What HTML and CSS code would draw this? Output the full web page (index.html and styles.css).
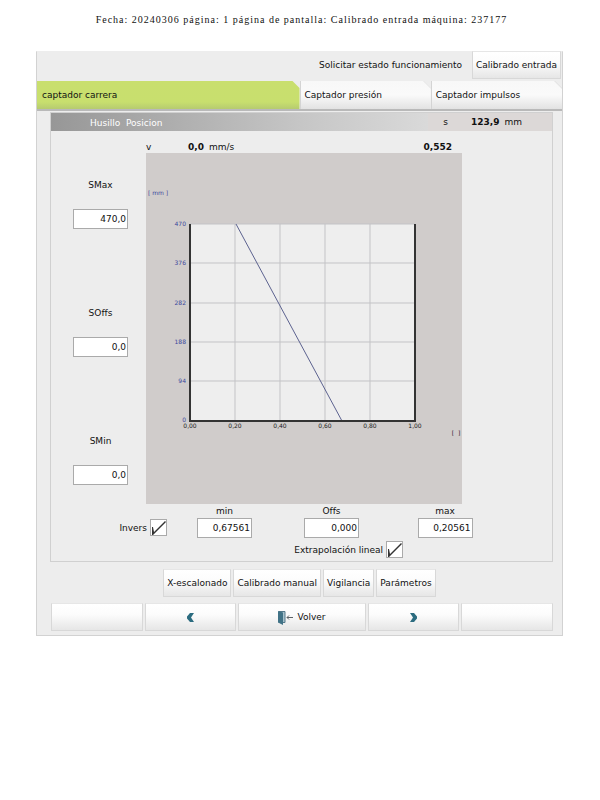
FILE: index.html
```html
<!DOCTYPE html>
<html lang="es">
<head>
    <meta charset="utf-8">
    <title>Calibrado entrada</title>
    <link rel="stylesheet" href="styles.css">
</head>
<body>
    <p class="print-header">Fecha: 20240306 página: 1 página de pantalla: Calibrado entrada máquina: 237177</p>

    <main class="screen">
        <header class="topbar">
            <span>Solicitar estado funcionamiento</span>
            <button class="btn btn-top">Calibrado entrada</button>
        </header>

        <nav class="tabs">
            <button class="tab active">captador carrera</button>
            <button class="tab">Captador presión</button>
            <button class="tab">Captador impulsos</button>
        </nav>

        <section class="group">
            <div class="title-bar">
                <h1>Husillo&nbsp; Posicion</h1>
                <div class="position">
                    <span class="position-name">s</span>
                    <b>123,9</b>
                    <span>mm</span>
                </div>
            </div>

            <div class="readings">
                <span class="speed-name">v</span>
                <b>0,0</b>
                <span class="unit">mm/s</span>
                <b class="signal">0,552</b>
            </div>

            <div class="calibration">
                <div class="limits">
                    <div class="limit">
                        <label for="smax">SMax</label>
                        <input type="text" id="smax" value="470,0">
                    </div>
                    <div class="limit">
                        <label for="soffs">SOffs</label>
                        <input type="text" id="soffs" value="0,0">
                    </div>
                    <div class="limit">
                        <label for="smin">SMin</label>
                        <input type="text" id="smin" value="0,0">
                    </div>
                </div>

                <svg class="chart" viewBox="0 0 316 351">
                    <rect class="plot" x="44" y="71" width="225" height="197"/>
                    <path class="grid-lines" d="M44 71H269M44 110H269M44 150H269M44 189H269M44 228H269M89 71V268M134 71V268M179 71V268M224 71V268"/>
                    <path class="curve" d="M90 71L196 268"/>
                    <path class="axes" d="M44 71V268H269V71"/>
                    <g class="y-labels">
                        <text x="2" y="42" class="y-unit">[ mm ]</text>
                        <text x="40" y="73">470</text>
                        <text x="40" y="112">376</text>
                        <text x="40" y="152">282</text>
                        <text x="40" y="191">188</text>
                        <text x="40" y="230">94</text>
                        <text x="40" y="269">0</text>
                    </g>
                    <g class="x-labels">
                        <text x="44" y="275">0,00</text>
                        <text x="89" y="275">0,20</text>
                        <text x="134" y="275">0,40</text>
                        <text x="179" y="275">0,60</text>
                        <text x="224" y="275">0,80</text>
                        <text x="269" y="275">1,00</text>
                        <text x="310" y="282">[&#160;&#160;]</text>
                    </g>
                </svg>
            </div>

            <div class="range">
                <div class="check">
                    <label for="invers">Invers</label>
                    <input type="checkbox" id="invers" checked>
                </div>
                <div class="field">
                    <label for="min">min</label>
                    <input type="text" id="min" value="0,67561">
                </div>
                <div class="field">
                    <label for="offs">Offs</label>
                    <input type="text" id="offs" value="0,000">
                </div>
                <div class="field">
                    <label for="max">max</label>
                    <input type="text" id="max" value="0,20561">
                </div>
            </div>

            <div class="check extrapolation">
                <label for="lineal">Extrapolación lineal</label>
                <input type="checkbox" id="lineal" checked>
            </div>
        </section>

        <div class="actions">
            <button class="btn">X-escalonado</button>
            <button class="btn">Calibrado manual</button>
            <button class="btn">Vigilancia</button>
            <button class="btn">Parámetros</button>
        </div>

        <footer class="softkeys">
            <button class="btn" aria-label="F1"></button>
            <button class="btn" aria-label="Anterior">
                <svg width="7" height="9" viewBox="0 0 7 9"><path fill="#2c6c80" d="M3 0H7L4 4.500L7 9H3L0 5.500V3.500Z"/></svg>
            </button>
            <button class="btn">
                <svg width="15" height="15" viewBox="0 0 15 15">
                    <path fill="#a9c3ce" stroke="#55798a" d="M1 1.500H7V12.500H1Z"/>
                    <path fill="#417387" d="M0 1L5 2.500V15L0 12.500Z"/>
                    <path fill="none" stroke="#5b6266" d="M15 7.500H9M11 5.500L9 7.500L11 9.500"/>
                </svg>
                Volver
            </button>
            <button class="btn" aria-label="Siguiente">
                <svg width="7" height="9" viewBox="0 0 7 9"><path fill="#2c6c80" d="M4 0H0L3 4.500L0 9H4L7 5.500V3.500Z"/></svg>
            </button>
            <button class="btn" aria-label="F5"></button>
        </footer>
    </main>
</body>
</html>
```
FILE: styles.css
```css
* {
    box-sizing: border-box;
}

body {
    margin: 0;
    padding: 0 37px 0 36px;
    background-color: #fff;
    font-family: "DejaVu Sans", sans-serif;
    font-size: 9px;
    line-height: 12px;
    color: #111;
}

button,
input {
    margin: 0;
    font: inherit;
    color: inherit;
}

.print-header {
    margin: 0;
    padding: 14px 0 25px 4px;
    font-family: "Liberation Serif", serif;
    font-size: 10px;
    letter-spacing: 1px;
    text-align: center;
}

.screen {
    padding-bottom: 4px;
    border: 1px solid #d2d2d2;
    border-top-color: #ededed;
    background-color: #ededed;
}

.topbar {
    display: flex;
    justify-content: flex-end;
    align-items: center;
    gap: 10px;
    height: 29px;
    padding: 0 1px 3px 0;
}

.btn {
    display: flex;
    justify-content: center;
    align-items: center;
    gap: 4px;
    height: 28px;
    padding: 0 3px;
    border: 1px solid #d8d8d8;
    border-top-color: #e6e6e6;
    background: linear-gradient(#fff, #fcfcfc 40%, #e6e6e6);
    white-space: nowrap;
}

.tabs {
    display: grid;
    grid-template-columns: 2fr 1fr 1fr;
    height: 30px;
    border-bottom: 2px solid #b9b9b9;
}

.tab {
    padding: 0 4px;
    border: none;
    border-left: 1px solid #d4d4d4;
    background: linear-gradient(225deg, #d8d8d8 5px, transparent 6px), linear-gradient(#f8f8f8, #fafafa 50%, #e2e2e2);
    clip-path: polygon(0 0, calc(100% - 7px) 0, 100% 7px, 100% 100%, 0 100%);
    text-align: left;
}

.tab.active {
    padding-left: 5px;
    border-left: none;
    background: linear-gradient(#c9df6e, #c8df6e 75%, #b6cb70);
}

.group {
    margin: 1px 9px 7px 13px;
    padding-bottom: 3px;
    border: 1px solid #d0d0d0;
}

.title-bar {
    display: flex;
    justify-content: space-between;
    height: 18px;
    background: linear-gradient(90deg, #979797, #c6c6c6 50%, #dadada 76%);
}

.title-bar h1 {
    margin: 0;
    padding: 4px 0 0 39px;
    font-size: 9px;
    font-weight: normal;
    color: #fff;
}

.position {
    display: flex;
    align-items: center;
    gap: 5px;
    padding: 0 30px 0 15px;
    background-color: #dcd8d7;
}

.position-name {
    margin-right: 18px;
}

.readings {
    display: flex;
    align-items: center;
    height: 22px;
    padding: 9px 100px 0 95px;
}

.speed-name {
    width: 42px;
}

.unit {
    margin-left: 5px;
}

.signal {
    margin-left: auto;
}

.calibration {
    display: grid;
    grid-template-columns: 95px 1fr;
    padding-right: 90px;
}

.limits {
    display: flex;
    flex-direction: column;
    justify-content: space-between;
    padding: 26px 18px 19px 22px;
}

.limit,
.field {
    display: flex;
    flex-direction: column;
    align-items: center;
}

.limit {
    gap: 18px;
}

input[type="text"] {
    width: 55px;
    height: 20px;
    padding: 0 1px;
    border: 1px solid #aaa;
    background-color: #fff;
    text-align: right;
}

.chart {
    display: block;
    width: 100%;
    background-color: #d0cccb;
    font-size: 6px;
}

.plot {
    fill: #eee;
}

.grid-lines {
    fill: none;
    stroke: #c3c3c6;
}

.curve {
    fill: none;
    stroke: #5c628f;
}

.axes {
    fill: none;
    stroke: #333;
    stroke-width: 2;
}

.y-labels {
    fill: #3c479c;
    text-anchor: end;
}

.y-unit {
    text-anchor: start;
}

.x-labels {
    fill: #222;
    text-anchor: middle;
}

.range {
    display: grid;
    grid-template-columns: 120px 107px 107px 1fr;
    align-items: end;
    padding: 1px 47px 3px 0;
}

.field {
    gap: 1px;
}

.check {
    display: flex;
    justify-content: flex-end;
    align-items: center;
    gap: 3px;
}

.range .check {
    padding: 0 4px 2px 0;
}

input[type="checkbox"] {
    appearance: none;
    width: 17px;
    height: 17px;
    border: 1px solid #aaa;
    background-color: #fff;
}

input[type="checkbox"]:checked::before {
    content: "";
    display: block;
    width: 15px;
    height: 15px;
    background-color: #333;
    clip-path: polygon(1px 7px, 2px 7px, 3px 12px, 14px 1px, 15px 2px, 2px 15px, 1px 15px);
}

.extrapolation {
    padding-right: 149px;
}

.actions {
    display: flex;
    justify-content: center;
    gap: 2px;
    margin-bottom: 6px;
}

.softkeys {
    display: grid;
    grid-template-columns: 92fr 92fr 128fr 92fr 92fr;
    gap: 2px;
    padding: 0 9px 0 14px;
}
```
